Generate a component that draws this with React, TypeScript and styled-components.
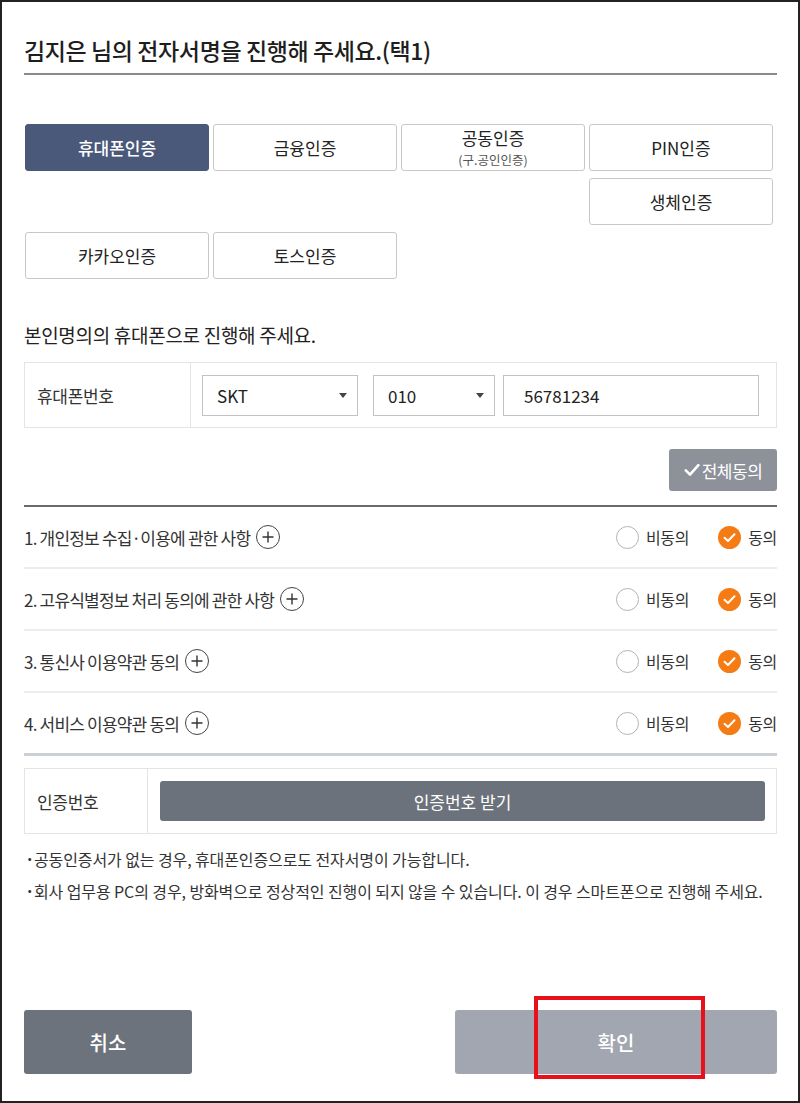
import React from 'react';
import styled, { createGlobalStyle } from 'styled-components';

const GlobalStyle = createGlobalStyle`
  html, body { margin: 0; padding: 0; background: #fff; }
  body { font-family: "Noto Sans CJK KR", "Noto Sans", sans-serif; color: #222; }
  * { box-sizing: border-box; }
`;

const Frame = styled.div`
  width: 800px;
  height: 1103px;
  border: 2px solid #222;
  padding: 0 21px 27px 22px;
  display: flex;
  flex-direction: column;
`;

const Title = styled.h1`
  margin: 0;
  padding: 33px 0 8px;
  font-size: 23px;
  font-weight: 500;
  line-height: 30px;
  letter-spacing: -0.4px;
  color: #1e1e1e;
  border-bottom: 2px solid #8a8a8a;
`;

const MethodGrid = styled.div`
  margin-top: 49px;
  padding-left: 1px;
  display: grid;
  grid-template-columns: repeat(4, 184px);
  grid-auto-rows: 47px;
  column-gap: 4px;
  row-gap: 7px;
`;

const MethodButton = styled.button<{ $active?: boolean; $col: number; $row: number }>`
  grid-column: ${p => p.$col};
  grid-row: ${p => p.$row};
  display: flex;
  flex-direction: column;
  align-items: center;
  justify-content: center;
  border: 1px solid ${p => (p.$active ? '#4a5879' : '#c8c8c8')};
  border-radius: 3px;
  background: ${p => (p.$active ? '#4a5879' : '#fff')};
  color: ${p => (p.$active ? '#fff' : '#222')};
  font-family: inherit;
  font-size: 17px;
  font-weight: ${p => (p.$active ? 500 : 400)};
  line-height: 20px;
  padding: 0;
`;

const MainLabel = styled.span`
  display: block;
  line-height: 1.45;
`;

const SubLabel = styled.span`
  display: block;
  font-size: 12.5px;
  line-height: 1.45;
  color: #555;
`;

const SectionHeading = styled.h2`
  margin: 43px 0 0;
  font-size: 19px;
  font-weight: 400;
  line-height: 26px;
  letter-spacing: -0.3px;
  color: #222;
`;

const FormTable = styled.div<{ $height: number; $top: number }>`
  display: flex;
  height: ${p => p.$height}px;
  margin-top: ${p => p.$top}px;
  border: 1px solid #e4e4e4;
`;

const LabelCell = styled.div<{ $width: number }>`
  width: ${p => p.$width}px;
  flex-shrink: 0;
  display: flex;
  align-items: center;
  padding-left: 12px;
  border-right: 1px solid #e4e4e4;
  font-size: 17px;
  letter-spacing: -0.3px;
  color: #333;
`;

const FieldCell = styled.div`
  flex: 1;
  display: flex;
  align-items: center;
  padding: 0 17px 0 11px;
`;

const SelectBox = styled.div<{ $width: number; $gap: number }>`
  width: ${p => p.$width}px;
  height: 41px;
  margin-right: ${p => p.$gap}px;
  border: 1px solid #c2c2c2;
  display: flex;
  align-items: center;
  justify-content: space-between;
  padding: 0 10px 0 14px;
  font-size: 17px;
  color: #222;
`;

const Caret = styled.span`
  width: 0;
  height: 0;
  border-left: 4.5px solid transparent;
  border-right: 4.5px solid transparent;
  border-top: 5px solid #444;
`;

const TextInput = styled.div`
  flex: 1;
  height: 41px;
  border: 1px solid #c2c2c2;
  display: flex;
  align-items: center;
  padding-left: 20px;
  font-size: 17px;
  color: #222;
`;

const AgreeAllRow = styled.div`
  margin-top: 21px;
  display: flex;
  justify-content: flex-end;
`;

const AgreeAllButton = styled.button`
  width: 108px;
  height: 42px;
  border: none;
  border-radius: 3px;
  background: #8d9199;
  color: #fff;
  font-family: inherit;
  font-size: 17px;
  letter-spacing: -0.5px;
  padding: 0;
  display: flex;
  align-items: center;
  justify-content: center;
  gap: 2px;
`;

const AgreeList = styled.div`
  margin-top: 14px;
  border-top: 2px solid #6a6a6a;
`;

const AgreeRow = styled.div<{ $last?: boolean }>`
  height: ${p => (p.$last ? 63 : 62)}px;
  display: flex;
  align-items: center;
  justify-content: space-between;
  border-bottom: ${p => (p.$last ? '3px solid #cbd0d6' : '2px solid #ececec')};
`;

const AgreeTitle = styled.div`
  display: flex;
  align-items: center;
  font-size: 17px;
  letter-spacing: -0.8px;
  color: #333;
`;

const PlusIcon = styled.span`
  margin-left: 6px;
  width: 24px;
  height: 24px;
  border: 1px solid #444;
  border-radius: 50%;
  display: flex;
  align-items: center;
  justify-content: center;
`;

const RadioGroup = styled.div`
  display: flex;
  align-items: center;
`;

const RadioOption = styled.label`
  display: flex;
  align-items: center;
  gap: 7px;
  font-size: 16px;
  color: #333;
  letter-spacing: -0.3px;
  & + & {
    margin-left: 29px;
  }
`;

const RadioCircle = styled.span`
  width: 23px;
  height: 23px;
  border: 1.5px solid #b0b4ba;
  border-radius: 50%;
  background: #fff;
`;

const AuthCell = styled.div`
  flex: 1;
  display: flex;
  align-items: center;
  padding: 0 11px 0 12px;
`;

const AuthButton = styled.button`
  flex: 1;
  height: 40px;
  border: none;
  border-radius: 3px;
  background: #6c727b;
  color: #fff;
  font-family: inherit;
  font-size: 17px;
  padding: 0;
`;

const Notes = styled.ul`
  margin: 9px 0 0;
  padding: 0;
  list-style: none;
`;

const Note = styled.li`
  position: relative;
  padding-left: 10px;
  font-size: 16px;
  line-height: 32px;
  letter-spacing: -0.1px;
  color: #333;
  &::before {
    content: '·';
    position: absolute;
    left: 1px;
    top: -1px;
    font-weight: 700;
  }
`;

const Footer = styled.div`
  margin-top: auto;
  display: flex;
  justify-content: space-between;
`;

const FooterButton = styled.button<{ $width: number; $tone: string }>`
  position: relative;
  width: ${p => p.$width}px;
  height: 64px;
  border: none;
  border-radius: 3px;
  background: ${p => p.$tone};
  color: #fff;
  font-family: inherit;
  font-size: 20px;
  font-weight: 500;
  padding: 0;
`;

const Highlight = styled.span`
  position: absolute;
  left: 79px;
  top: -14px;
  width: 171px;
  height: 83px;
  border: 4px solid #e8101a;
`;

const CheckedRadio = () => (
  <svg width="23" height="23" viewBox="0 0 23 23">
    <circle cx="11.5" cy="11.5" r="11.5" fill="#f57c14" />
    <path d="M6.5 11.8 L10 15 L16.5 8.3" fill="none" stroke="#fff" strokeWidth="2" strokeLinecap="round" strokeLinejoin="round" />
  </svg>
);

const agreements = [
  '1. 개인정보 수집·이용에 관한 사항',
  '2. 고유식별정보 처리 동의에 관한 사항',
  '3. 통신사 이용약관 동의',
  '4. 서비스 이용약관 동의',
];

function App() {
  return (
    <>
      <GlobalStyle />
      <Frame>
        <Title>김지은 님의 전자서명을 진행해 주세요.(택1)</Title>

        <MethodGrid>
          <MethodButton $active $col={1} $row={1}>휴대폰인증</MethodButton>
          <MethodButton $col={2} $row={1}>금융인증</MethodButton>
          <MethodButton $col={3} $row={1}>
            <MainLabel>공동인증</MainLabel>
            <SubLabel>(구.공인인증)</SubLabel>
          </MethodButton>
          <MethodButton $col={4} $row={1}>PIN인증</MethodButton>
          <MethodButton $col={4} $row={2}>생체인증</MethodButton>
          <MethodButton $col={1} $row={3}>카카오인증</MethodButton>
          <MethodButton $col={2} $row={3}>토스인증</MethodButton>
        </MethodGrid>

        <SectionHeading>본인명의의 휴대폰으로 진행해 주세요.</SectionHeading>

        <FormTable $height={66} $top={14}>
          <LabelCell $width={166}>휴대폰번호</LabelCell>
          <FieldCell>
            <SelectBox $width={156} $gap={15}>SKT<Caret /></SelectBox>
            <SelectBox $width={122} $gap={8}>010<Caret /></SelectBox>
            <TextInput>56781234</TextInput>
          </FieldCell>
        </FormTable>

        <AgreeAllRow>
          <AgreeAllButton>
            <svg width="16" height="14" viewBox="0 0 16 14">
              <path d="M1.8 7.4 L6 11.6 L14.4 2.2" fill="none" stroke="#fff" strokeWidth="2.6" strokeLinecap="round" strokeLinejoin="round" />
            </svg>
            전체동의
          </AgreeAllButton>
        </AgreeAllRow>

        <AgreeList>
          {agreements.map((text, i) => (
            <AgreeRow key={i} $last={i === agreements.length - 1}>
              <AgreeTitle>
                {text}
                <PlusIcon>
                  <svg width="12" height="12" viewBox="0 0 12 12">
                    <path d="M6 0.5 V11.5 M0.5 6 H11.5" stroke="#333" strokeWidth="1.4" />
                  </svg>
                </PlusIcon>
              </AgreeTitle>
              <RadioGroup>
                <RadioOption><RadioCircle />비동의</RadioOption>
                <RadioOption><CheckedRadio />동의</RadioOption>
              </RadioGroup>
            </AgreeRow>
          ))}
        </AgreeList>

        <FormTable $height={66} $top={12}>
          <LabelCell $width={123}>인증번호</LabelCell>
          <AuthCell>
            <AuthButton>인증번호 받기</AuthButton>
          </AuthCell>
        </FormTable>

        <Notes>
          <Note>공동인증서가 없는 경우, 휴대폰인증으로도 전자서명이 가능합니다.</Note>
          <Note>회사 업무용 PC의 경우, 방화벽으로 정상적인 진행이 되지 않을 수 있습니다. 이 경우 스마트폰으로 진행해 주세요.</Note>
        </Notes>

        <Footer>
          <FooterButton $width={168} $tone="#6d737c">취소</FooterButton>
          <FooterButton $width={322} $tone="#a2a6b0">
            확인
            <Highlight />
          </FooterButton>
        </Footer>
      </Frame>
    </>
  );
}

export default App;
